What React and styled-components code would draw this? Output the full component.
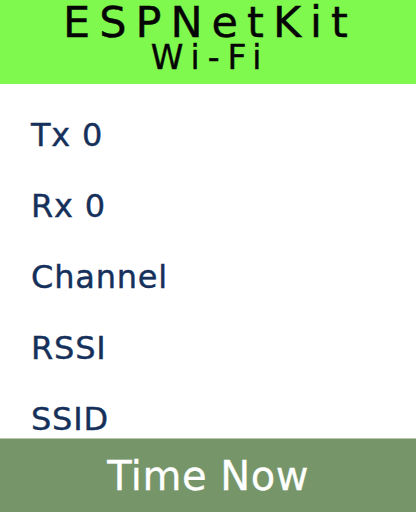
import React from 'react';
import styled, { createGlobalStyle } from 'styled-components';

const GlobalStyle = createGlobalStyle`
  html, body {
    margin: 0;
    padding: 0;
    background: #ffffff;
  }
  body {
    font-family: "DejaVu Sans", "Open Sans", sans-serif;
  }
`;

const stats = ['Tx 0', 'Rx 0', 'Channel', 'RSSI', 'SSID'];

const App = () => {
  return (
    <>
      <GlobalStyle />
      <Screen>
        <Header>
          <Title>ESPNetKit</Title>
          <Subtitle>Wi-Fi</Subtitle>
        </Header>
        <StatList>
          {stats.map((label) => (
            <StatRow key={label}>{label}</StatRow>
          ))}
        </StatList>
        <Footer>Time Now</Footer>
      </Screen>
    </>
  );
};

const Screen = styled.div`
  width: 416px;
  height: 512px;
  display: flex;
  flex-direction: column;
  overflow: hidden;
  background: #ffffff;
`;

const Header = styled.header`
  height: 84px;
  flex-shrink: 0;
  background-color: #80f94f;
  display: flex;
  flex-direction: column;
  align-items: center;
  color: #050505;
  -webkit-text-stroke: 0.4px #050505;
`;

const Title = styled.div`
  font-size: 43px;
  line-height: 44px;
  letter-spacing: 9px;
  padding-left: 4px;
`;

const Subtitle = styled.div`
  font-size: 33px;
  line-height: 28px;
  letter-spacing: 8px;
  padding-left: 4px;
`;

const StatList = styled.ul`
  flex: 1;
  margin: 0;
  padding: 16px 0 0 31px;
  list-style: none;
  overflow: hidden;
`;

const StatRow = styled.li`
  height: 71px;
  line-height: 71px;
  font-size: 32px;
  letter-spacing: 0.8px;
  color: #15305a;
  -webkit-text-stroke: 0.4px #15305a;
  white-space: nowrap;
`;

const Footer = styled.footer`
  height: 73px;
  flex-shrink: 0;
  background-color: #76966a;
  border-top: 1px solid #b9c8b2;
  display: flex;
  align-items: center;
  justify-content: center;
  color: #ffffff;
  font-size: 40px;
  letter-spacing: 0.5px;
  -webkit-text-stroke: 0.3px #ffffff;
`;

export default App;
